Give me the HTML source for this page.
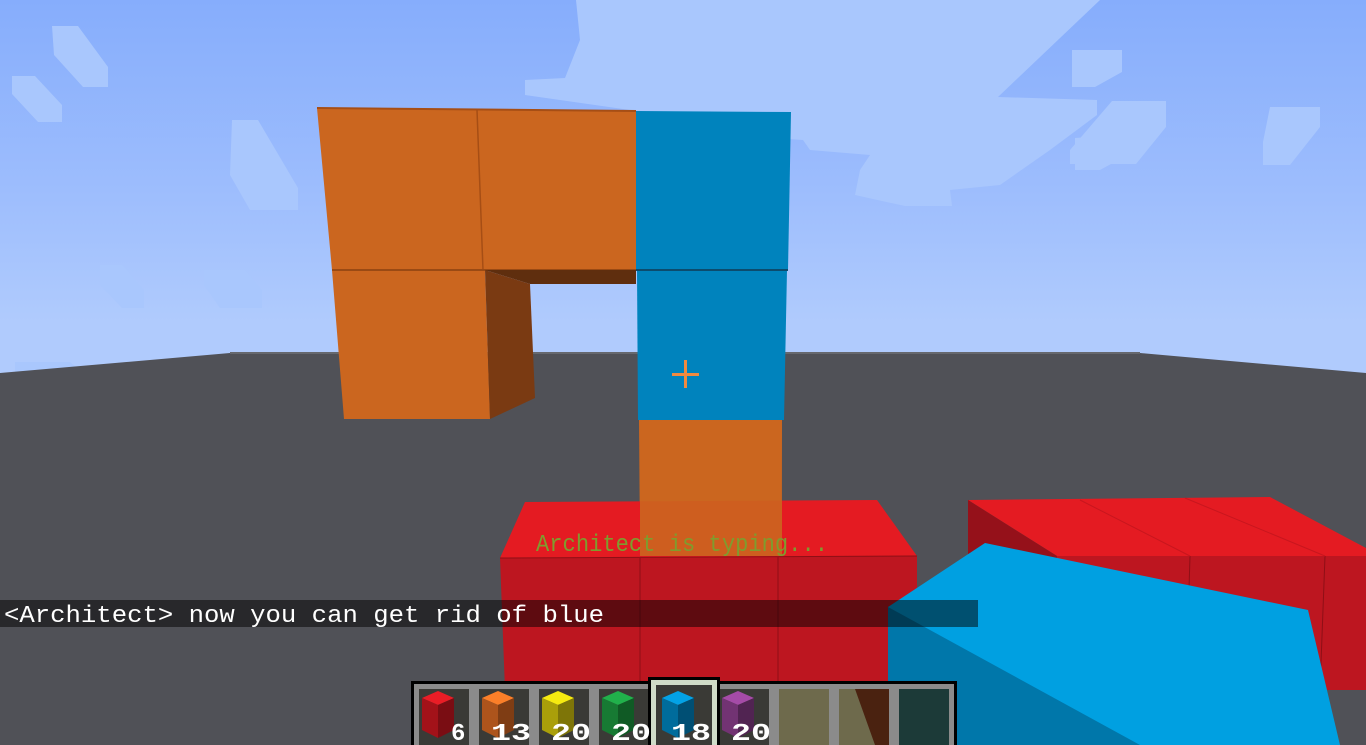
<!DOCTYPE html>
<html><head><meta charset="utf-8"><style>
html,body{margin:0;padding:0;width:1366px;height:745px;overflow:hidden;background:#8fb3f8}
svg{display:block}
.t{font-family:"Liberation Mono","DejaVu Sans Mono",monospace}
</style></head><body>
<svg width="1366" height="745" viewBox="0 0 1366 745" xmlns="http://www.w3.org/2000/svg">
<defs>
<linearGradient id="sky" x1="0" y1="0" x2="0" y2="1">
<stop offset="0" stop-color="#86adfc"/><stop offset="0.5" stop-color="#9dbdfd"/><stop offset="0.85" stop-color="#b0cbfd"/><stop offset="1" stop-color="#b0cbfd"/>
</linearGradient>
</defs>
<rect width="1366" height="380" fill="url(#sky)"/>
<!-- clouds -->
<g fill="#a9c7fd">
<polygon points="576,0 1100,0 998,97 1097,100 1097,115 1050,150 1000,185 950,190 952,206 905,206 855,195 860,170 870,155 810,150 803,140 730,135 720,125 640,125 630,110 560,100 525,95 525,80 565,78 580,40"/>
<polygon points="1072,50 1122,50 1122,72 1095,87 1072,87"/>
<polygon points="1075,138 1122,135 1122,158 1100,170 1075,170"/>
<polygon points="1112,101 1166,101 1166,127 1136,164 1070,164 1070,150"/>
<polygon points="1270,107 1320,107 1320,127 1290,165 1263,165 1263,142"/>
<polygon points="52,26 78,26 108,67 108,87 83,87 54,55"/>
<polygon points="12,76 35,76 62,105 62,122 38,122 12,94"/>
<polygon points="232,120 258,120 298,188 298,210 250,210 230,175"/>
<polygon points="336,123 362,123 378,158 378,180 352,180 336,150"/>
<polygon points="100,265 122,265 144,290 144,308 122,308 100,285"/>
<polygon points="204,270 245,270 262,290 262,308 220,308 204,285"/>
<polygon points="15,362 70,362 115,400 115,432 95,432 15,380"/>
<polygon points="105,378 125,378 140,395 140,408 110,408"/>
<polygon points="265,408 320,408 320,432 265,432"/>
</g>
<!-- ground -->
<polygon points="0,373 230,353 1140,353 1366,373 1366,745 0,745" fill="#505157"/>
<rect x="230" y="352" width="910" height="2" fill="#66686e"/>
<!-- orange/blue structure -->
<polygon points="317,108 477,110 483,270 332,270" fill="#cb661f"/>
<polygon points="477,110 636,111 636,270 483,270" fill="#cb661f"/>
<line x1="477" y1="110" x2="483" y2="270" stroke="#a64e15" stroke-width="1.5"/>
<line x1="317" y1="108" x2="636" y2="111" stroke="#a64e15" stroke-width="2"/>
<polygon points="636,111 791,112 788,270 636,270" fill="#0083bd"/>
<polygon points="332,270 485,270 490,419 344,419" fill="#cb661f"/>
<line x1="332" y1="270" x2="636" y2="270" stroke="#9a4a14" stroke-width="2"/>
<polygon points="485,270 636,270 636,284 530,284" fill="#5f2e0e"/>
<polygon points="485,270 530,284 535,398 490,419" fill="#7a3a12"/>
<polygon points="637,270 787,270 784,420 638,420" fill="#0083bd"/>
<line x1="636" y1="270" x2="788" y2="270" stroke="#0c4c6e" stroke-width="2"/>
<polygon points="639,420 782,420 780,545 640,545" fill="#cb661f"/>
<!-- crosshair -->
<rect x="672" y="373" width="27" height="3" fill="#f08a40"/>
<rect x="684" y="360" width="3" height="28" fill="#f08a40"/>
<!-- red block center -->
<polygon points="525,502 877,500 917,556 500,558" fill="#e41b22"/>
<polygon points="640,420 782,420 782,556 640,556" fill="#cb661f" opacity="0.9"/>
<polygon points="500,558 917,556 917,690 505,690" fill="#bd1620"/>
<line x1="640" y1="558" x2="640" y2="690" stroke="#8f0f16"/>
<line x1="778" y1="557" x2="778" y2="690" stroke="#8f0f16"/>
<line x1="500" y1="558" x2="917" y2="556" stroke="#8f0f16"/>
<!-- red block right -->
<polygon points="968,500 1270,497 1366,548 1366,556 1057,556" fill="#e41b22"/>
<polygon points="968,500 1057,556 1057,690 968,690" fill="#95111a"/>
<polygon points="1057,556 1366,556 1366,690 1057,690" fill="#bd1620"/>
<line x1="1190" y1="556" x2="1186" y2="690" stroke="#8f0f16"/>
<line x1="1325" y1="556" x2="1320" y2="690" stroke="#8f0f16"/>
<line x1="1080" y1="500" x2="1190" y2="556" stroke="#c8161e"/>
<line x1="1185" y1="498" x2="1325" y2="556" stroke="#c8161e"/>
<!-- typing -->
<text x="536" y="551" class="t" font-size="24" fill="#7f9c2e" textLength="292" lengthAdjust="spacingAndGlyphs">Architect is typing...</text>
<!-- hand -->
<polygon points="888,607 985,543 1308,610 1340,745 888,745" fill="#00a0e1"/>
<polygon points="888,607 1140,745 888,745" fill="#0077aa"/>
<!-- chat -->
<rect x="0" y="600" width="978" height="27" fill="#000" opacity="0.5"/>
<text x="4" y="622" class="t" font-size="24" fill="#fff" textLength="600" lengthAdjust="spacingAndGlyphs">&lt;Architect&gt; now you can get rid of blue</text>
<!-- hotbar -->
<rect x="411" y="681" width="546" height="64" fill="#000"/>
<rect x="414" y="684" width="540" height="61" fill="#8b8b8b"/>
<g fill="#3a3a36">
<rect x="419" y="689" width="50" height="56"/><rect x="479" y="689" width="50" height="56"/><rect x="539" y="689" width="50" height="56"/><rect x="599" y="689" width="50" height="56"/><rect x="659" y="689" width="50" height="56"/><rect x="719" y="689" width="50" height="56"/>
</g>
<rect x="779" y="689" width="50" height="56" fill="#6e6a4c"/>
<rect x="839" y="689" width="50" height="56" fill="#6e6a4c"/>
<polygon points="855,689 889,689 889,745 875,745" fill="#4a2210"/>
<rect x="899" y="689" width="50" height="56" fill="#1c3a38"/>
<rect x="648" y="677" width="72" height="68" fill="#000"/>
<rect x="651" y="680" width="66" height="65" fill="#d0dcc8"/>
<rect x="656" y="685" width="56" height="60" fill="#3a3a36"/>
<g>
<polygon points="422,698 438,691 454,698 438,705" fill="#e91d26"/><polygon points="422,698 438,705 438,738 422,730" fill="#a31219"/><polygon points="438,705 454,698 454,730 438,738" fill="#7a0d13"/>
<polygon points="482,698 498,691 514,698 498,705" fill="#fb7f29"/><polygon points="482,698 498,705 498,738 482,730" fill="#ad541c"/><polygon points="498,705 514,698 514,730 498,738" fill="#7f3d14"/>
<polygon points="542,698 558,691 574,698 558,705" fill="#f6ea10"/><polygon points="542,698 558,705 558,738 542,730" fill="#aa9f0a"/><polygon points="558,705 574,698 574,730 558,738" fill="#7e7508"/>
<polygon points="602,698 618,691 634,698 618,705" fill="#21b14b"/><polygon points="602,698 618,705 618,738 602,730" fill="#177a33"/><polygon points="618,705 634,698 634,730 618,738" fill="#105a25"/>
<polygon points="662,698 678,691 694,698 678,705" fill="#03a2e6"/><polygon points="662,698 678,705 678,738 662,730" fill="#006c9c"/><polygon points="678,705 694,698 694,730 678,738" fill="#004f74"/>
<polygon points="722,698 738,691 754,698 738,705" fill="#a54ba7"/><polygon points="722,698 738,705 738,738 722,730" fill="#723373"/><polygon points="738,705 754,698 754,730 738,738" fill="#512452"/>
</g>
<g class="t" font-size="24" fill="#fff" font-weight="bold">
<text x="451" y="740">6</text>
<text x="491" y="740" textLength="40" lengthAdjust="spacingAndGlyphs">13</text>
<text x="551" y="740" textLength="40" lengthAdjust="spacingAndGlyphs">20</text>
<text x="611" y="740" textLength="40" lengthAdjust="spacingAndGlyphs">20</text>
<text x="671" y="740" textLength="40" lengthAdjust="spacingAndGlyphs">18</text>
<text x="731" y="740" textLength="40" lengthAdjust="spacingAndGlyphs">20</text>
</g>
</svg>
</body></html>
